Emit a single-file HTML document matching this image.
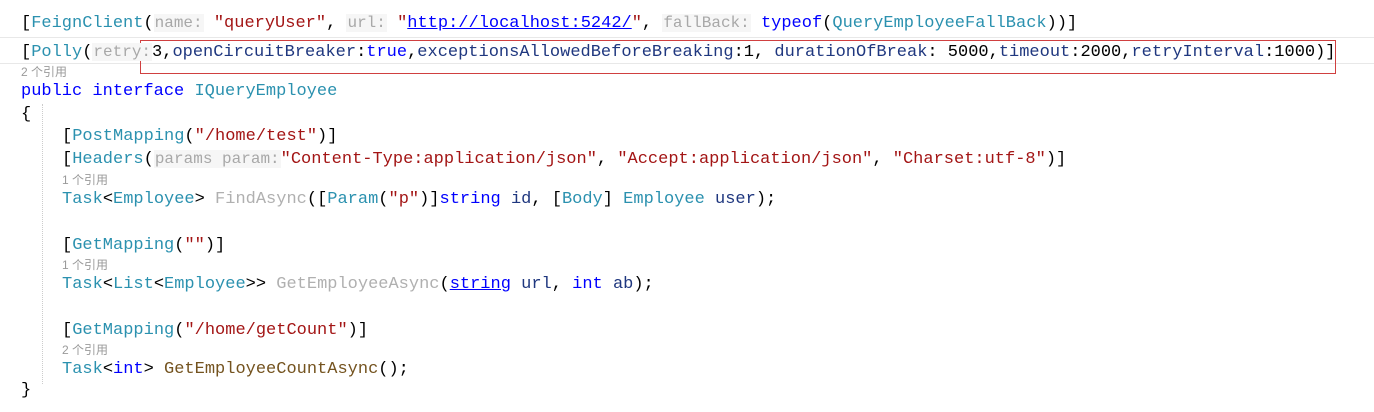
<!DOCTYPE html>
<html><head><meta charset="utf-8"><style>
body{margin:0;width:1374px;height:412px;background:#fff;position:relative;overflow:hidden;font-family:"Liberation Mono",monospace;font-size:17px;color:#000}
.l{position:absolute;left:21px;height:23px;line-height:23px;white-space:pre}
.i{left:62px}
.r{position:absolute;white-space:pre;font-family:"Liberation Sans","Noto Sans CJK SC",sans-serif;font-size:12px;color:#9a9a9a;line-height:14px}
.t{color:#2b91af}.s{color:#a31515}.k{color:#0000ff}.h{color:#a8a8a8;font-size:16px;background:#f6f6f6;padding:0 1px}.v{color:#1f377f}.m{color:#74531f}.g{color:#b0b0b0}
.u{text-decoration:underline}
</style></head><body>
<div style="position:absolute;left:0;top:37px;width:1374px;height:1px;background:#e8e8e8"></div>
<div style="position:absolute;left:0;top:63px;width:1374px;height:1px;background:#e8e8e8"></div>
<div style="position:absolute;left:140px;top:40px;width:1196px;height:34px;border:1px solid #d04040;box-sizing:border-box"></div>
<div style="position:absolute;left:42px;top:104px;width:0;height:280px;border-left:1px dotted #ccc"></div>
<div class="l" style="top:12px">[<span class="t">FeignClient</span>(<span class="h">name:</span> <span class="s">"queryUser"</span>, <span class="h">url:</span> <span class="s">"<span class="u" style="color:#0000ff">http://localhost:5242/</span>"</span>, <span class="h">fallBack:</span> <span class="k">typeof</span>(<span class="t">QueryEmployeeFallBack</span>))]</div>
<div class="l" style="top:41px">[<span class="t">Polly</span>(<span class="h">retry:</span>3,<span class="v">openCircuitBreaker</span>:<span class="k">true</span>,<span class="v">exceptionsAllowedBeforeBreaking</span>:1, <span class="v">durationOfBreak</span>: 5000,<span class="v">timeout</span>:2000,<span class="v">retryInterval</span>:1000)]</div>
<div class="r" style="left:21px;top:65px">2 个引用</div>
<div class="l" style="top:80px"><span class="k">public</span> <span class="k">interface</span> <span class="t">IQueryEmployee</span></div>
<div class="l" style="top:103px">{</div>
<div class="l i" style="top:125px">[<span class="t">PostMapping</span>(<span class="s">"/home/test"</span>)]</div>
<div class="l i" style="top:148px">[<span class="t">Headers</span>(<span class="h">params param:</span><span class="s">"Content-Type:application/json"</span>, <span class="s">"Accept:application/json"</span>, <span class="s">"Charset:utf-8"</span>)]</div>
<div class="r" style="left:62px;top:173px">1 个引用</div>
<div class="l i" style="top:188px"><span class="t">Task</span>&lt;<span class="t">Employee</span>&gt; <span class="g">FindAsync</span>([<span class="t">Param</span>(<span class="s">"p"</span>)]<span class="k">string</span> <span class="v">id</span>, [<span class="t">Body</span>] <span class="t">Employee</span> <span class="v">user</span>);</div>
<div class="l i" style="top:234px">[<span class="t">GetMapping</span>(<span class="s">""</span>)]</div>
<div class="r" style="left:62px;top:258px">1 个引用</div>
<div class="l i" style="top:273px"><span class="t">Task</span>&lt;<span class="t">List</span>&lt;<span class="t">Employee</span>&gt;&gt; <span class="g">GetEmployeeAsync</span>(<span class="k u">string</span> <span class="v">url</span>, <span class="k">int</span> <span class="v">ab</span>);</div>
<div class="l i" style="top:319px">[<span class="t">GetMapping</span>(<span class="s">"/home/getCount"</span>)]</div>
<div class="r" style="left:62px;top:343px">2 个引用</div>
<div class="l i" style="top:358px"><span class="t">Task</span>&lt;<span class="k">int</span>&gt; <span class="m">GetEmployeeCountAsync</span>();</div>
<div class="l" style="top:379px">}</div>
</body></html>
